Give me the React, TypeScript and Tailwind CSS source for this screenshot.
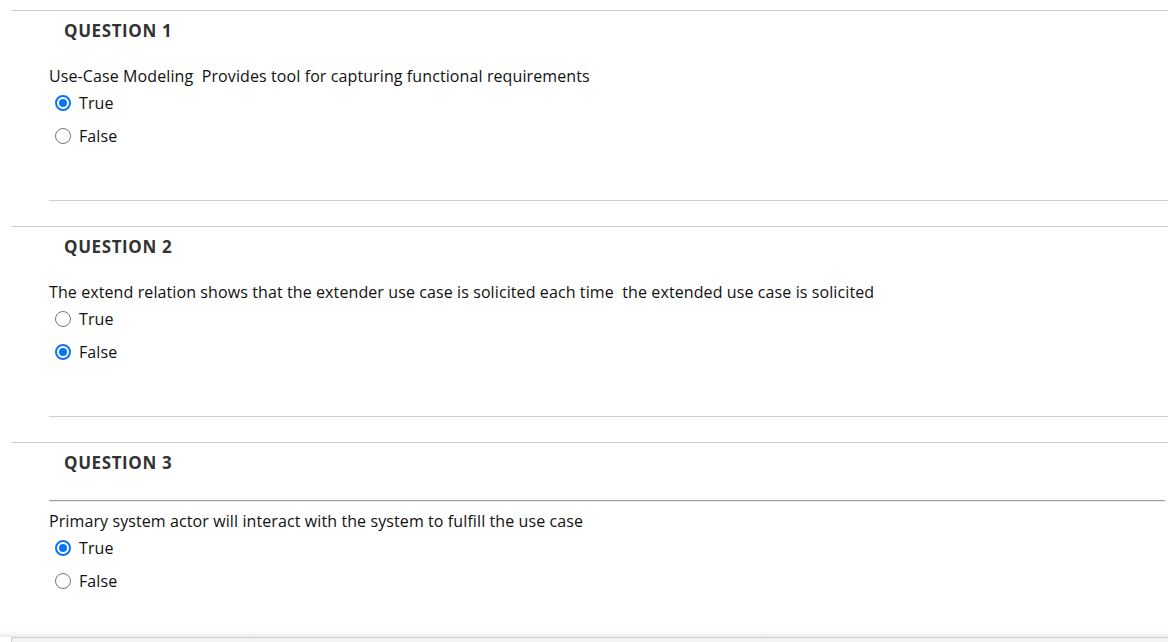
import React from "react";

const font = { fontFamily: '"Open Sans", "Liberation Sans", sans-serif' };

function Radio({ checked }: { checked: boolean }) {
  return checked ? (
    <span className="flex h-[16px] w-[16px] items-center justify-center rounded-full border-[2px] border-[#0b74f5] bg-white">
      <span className="h-[8px] w-[8px] rounded-full bg-[#0b74f5]" />
    </span>
  ) : (
    <span className="h-[16px] w-[16px] rounded-full border border-[#767676] bg-white" />
  );
}

function Option({ label, checked }: { label: string; checked: boolean }) {
  return (
    <div className="flex h-[33px] items-center pl-[6px]">
      <Radio checked={checked} />
      <span className="ml-[8px] text-[16px] leading-[22px] tracking-[0.1px] text-[#111]">{label}</span>
    </div>
  );
}

function Question({
  n,
  text,
  answer,
  hr,
  last,
}: {
  n: number;
  text: string;
  answer: boolean;
  hr?: boolean;
  last?: boolean;
}) {
  return (
    <section className="ml-[11px] border-t border-[#d0d0d0]">
      <div className="flex h-[39px] items-center pl-[53px] text-[17px] font-bold tracking-[0.6px] text-[#333]">
        QUESTION {n}
      </div>
      <div className="pl-[38px]">
        {hr ? (
          <>
            <div className="mt-[18px] mr-[3px] h-[2px] border-t border-b border-t-[#9b9b9b] border-b-[#ececec]" />
            <div className="h-[8px]" />
          </>
        ) : (
          <div className="h-[15px]" />
        )}
        <div className="whitespace-pre-wrap text-[16px] leading-[22px] tracking-[0.1px] text-[#111]">{text}</div>
        <div className="-mt-[1px]">
          <Option label="True" checked={answer} />
          <Option label="False" checked={!answer} />
        </div>
        {!last && (
          <>
            <div className="h-[48px]" />
            <div className="border-t border-[#d0d0d0]" />
            <div className="h-[25px]" />
          </>
        )}
      </div>
    </section>
  );
}

export default function App() {
  return (
    <div className="relative h-[642px] w-[1168px] overflow-hidden bg-white" style={font}>
      <div className="h-[10px]" />
      <Question
        n={1}
        text="Use-Case Modeling  Provides tool for capturing functional requirements"
        answer={true}
      />
      <Question
        n={2}
        text="The extend relation shows that the extender use case is solicited each time  the extended use case is solicited"
        answer={false}
      />
      <Question
        n={3}
        text="Primary system actor will interact with the system to fulfill the use case"
        answer={true}
        hr
        last
      />
      <div className="mt-[34px] h-[6px] bg-gradient-to-b from-white to-[#ebebeb]" />
      <div className="ml-[11px] h-[20px] border-t border-l border-[#cfcfcf] bg-[#f3f3f3]" />
    </div>
  );
}
